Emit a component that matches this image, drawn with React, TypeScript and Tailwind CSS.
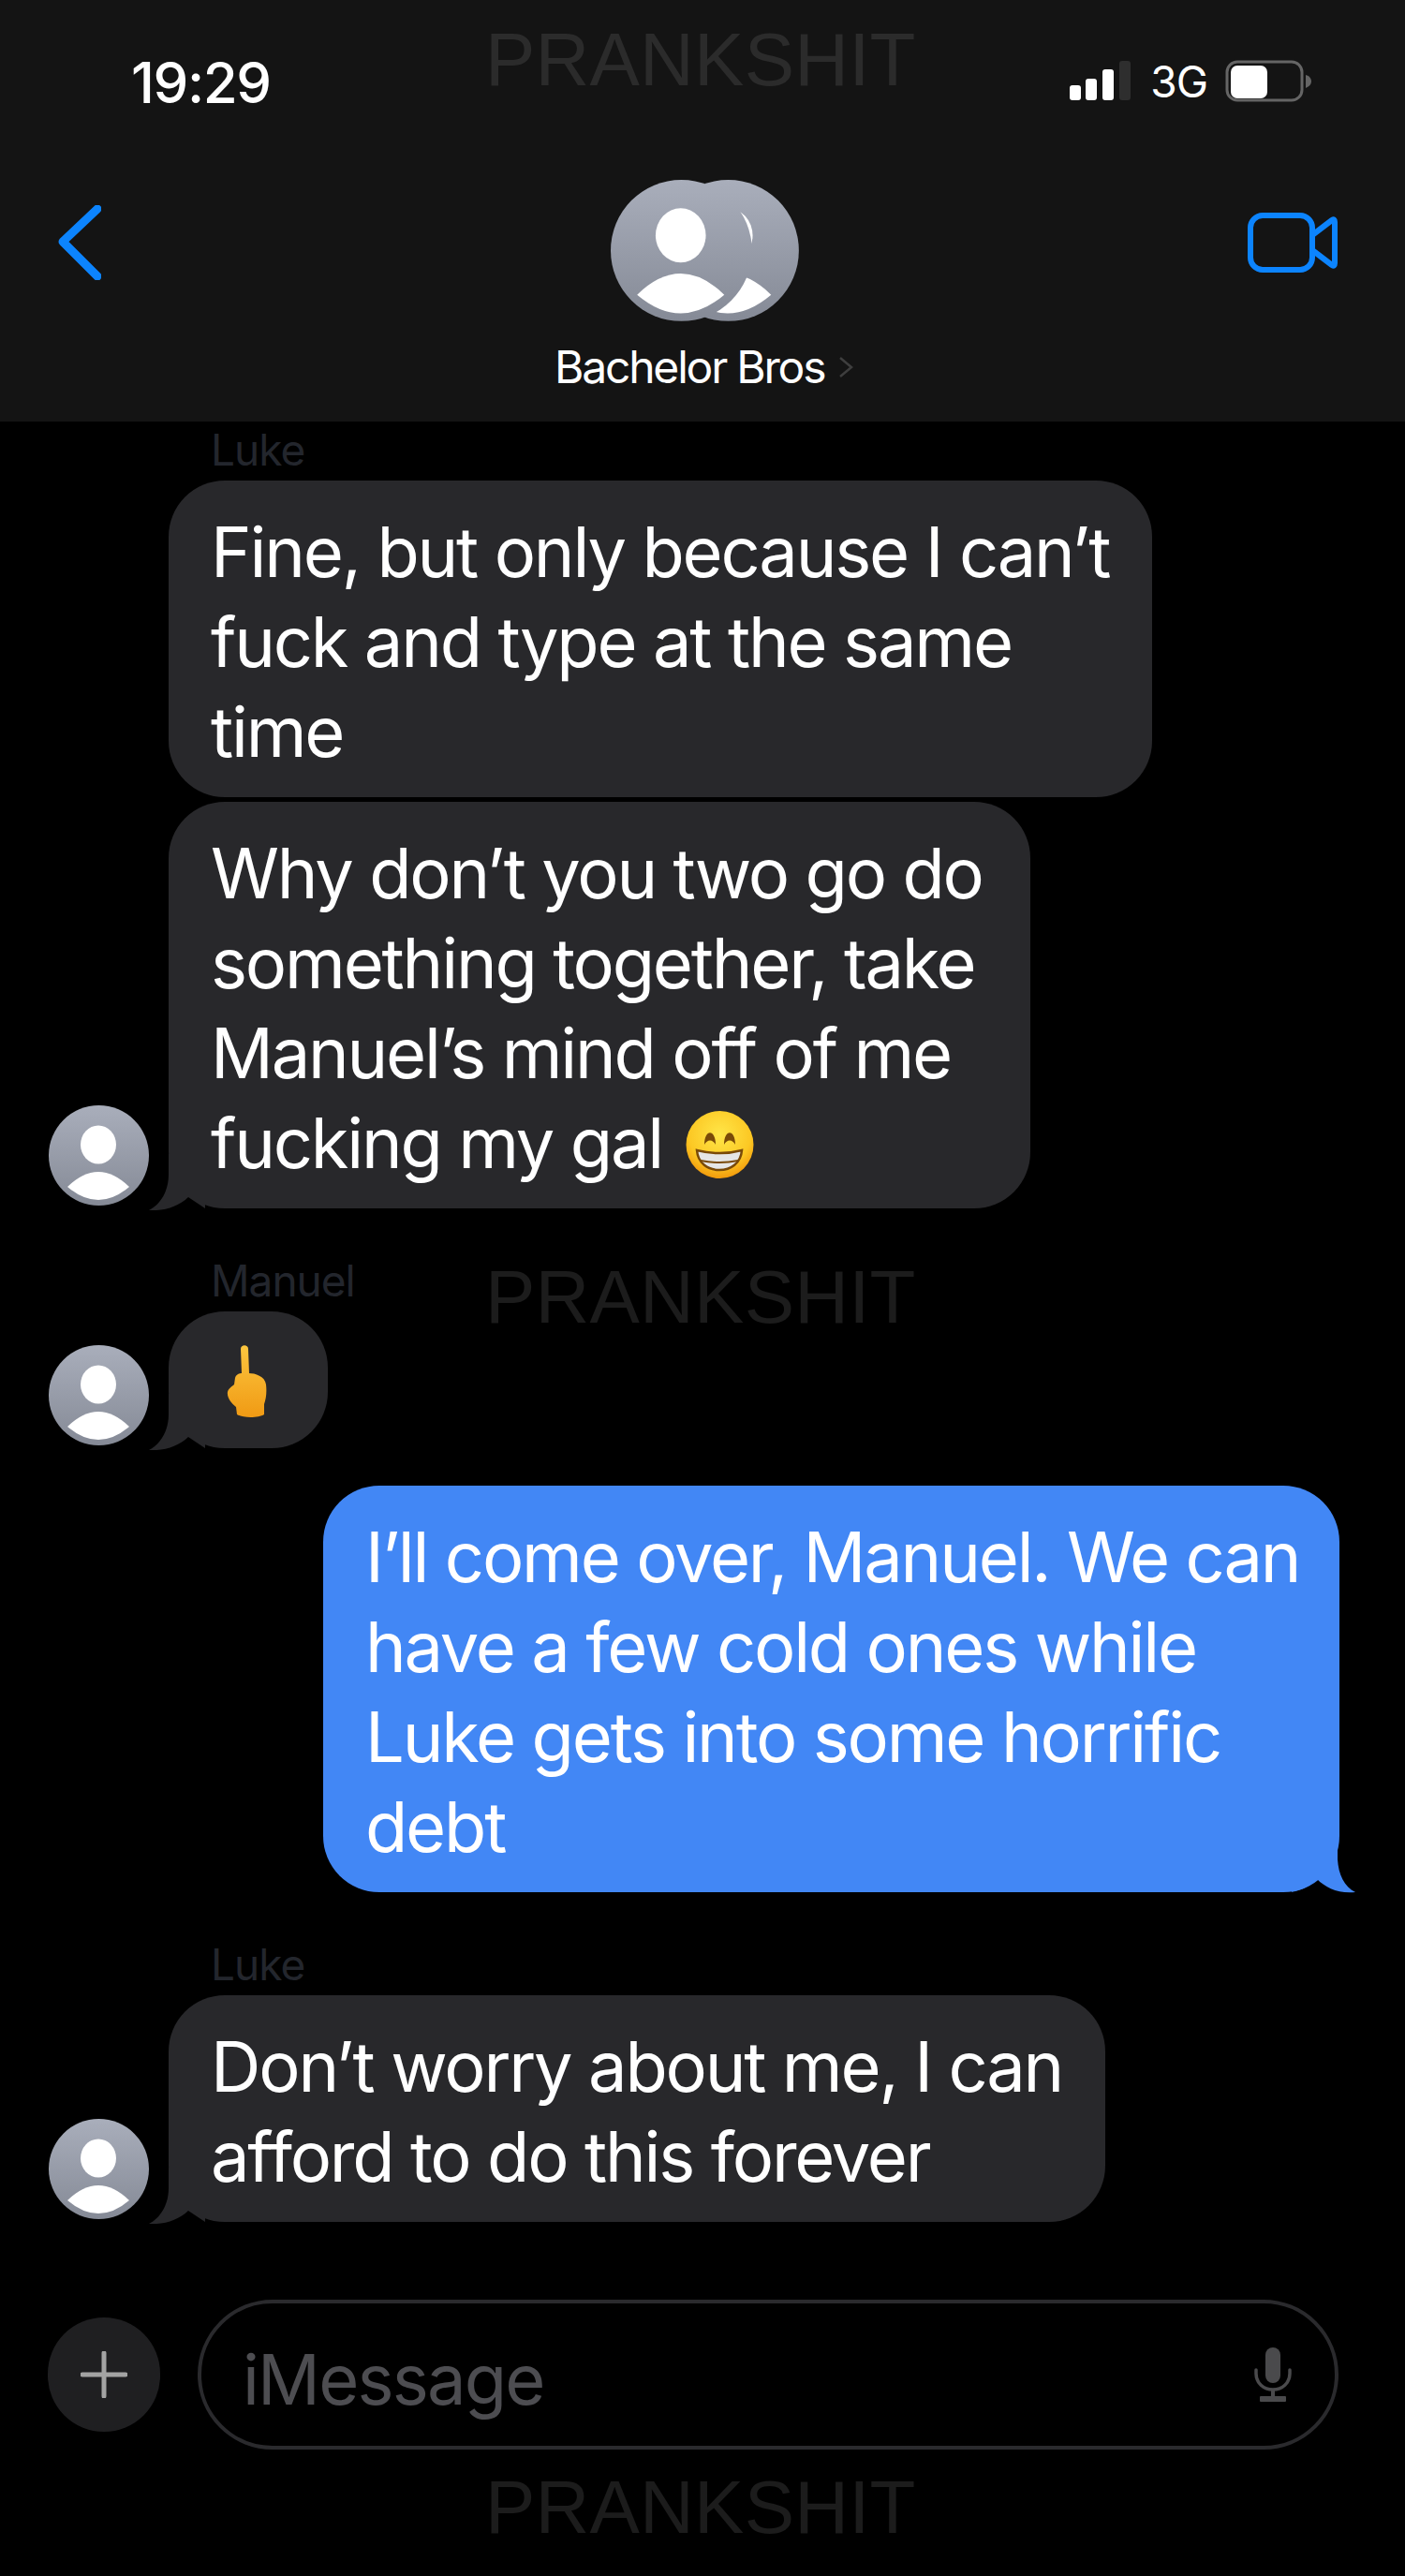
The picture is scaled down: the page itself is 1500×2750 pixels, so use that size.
import React from "react";

const inter = "font-['Inter','Noto_Sans',sans-serif]";

function Avatar() {
  return (
    <svg width="107" height="107" viewBox="0 0 107 107" className="shrink-0 block mb-[3px]">
      <defs>
        <linearGradient id="av" x1="0" y1="0" x2="0" y2="1">
          <stop offset="0" stopColor="#a9aebb" />
          <stop offset="1" stopColor="#858a96" />
        </linearGradient>
      </defs>
      <circle cx="53.5" cy="53.5" r="53.5" fill="url(#av)" />
      <ellipse cx="53" cy="42" rx="19" ry="20.5" fill="#fff" />
      <path d="M20 87Q53 55 86 87Q53 115 20 87Z" fill="#fff" />
    </svg>
  );
}

function TailLeft() {
  return (
    <svg width="60" height="60" viewBox="0 0 60 60" className="absolute left-[-21px] bottom-[-2px]">
      <path d="M21 0V22C21 40 12 54 0 60C16 61 32 56 42 46L60 58V0Z" fill="#28282b" />
    </svg>
  );
}

function TailRight() {
  return (
    <svg width="70" height="70" viewBox="0 0 70 70" className="absolute right-[-19px] bottom-[-1px]">
      <path d="M49 0V34C50 50 56 63 68 69C50 71 36 64 27 55C20 63 8 69 -6 69H0V0Z" fill="#4287f5" />
    </svg>
  );
}

function Grin() {
  return (
    <svg width="73" height="74" viewBox="0 0 73 74" className="inline-block align-[-12px] ml-[6px]">
      <defs>
        <radialGradient id="gr" cx="0.5" cy="0.35" r="0.65">
          <stop offset="0" stopColor="#ffe648" />
          <stop offset="0.7" stopColor="#fcc824" />
          <stop offset="1" stopColor="#f29a0c" />
        </radialGradient>
      </defs>
      <circle cx="36.5" cy="37" r="36" fill="url(#gr)" />
      <path d="M20 37C20 20 32 20 32 37C29 31 23 31 20 37Z" fill="#7a4a08" />
      <path d="M41 37C41 20 53 20 53 37C50 31 44 31 41 37Z" fill="#7a4a08" />
      <path d="M12 43C28 47 45 47 60 43C59 57 48 64 36 64C24 64 13 57 12 43Z" fill="#e6e6e6" stroke="#7a4a08" strokeWidth="2.500" />
      <path d="M16 54Q36 58 56 54" fill="none" stroke="#7a4a08" strokeWidth="2" />
    </svg>
  );
}

function Finger() {
  return (
    <svg width="44" height="78" viewBox="0 0 44 78">
      <defs>
        <linearGradient id="fi" x1="0" y1="0" x2="0" y2="1">
          <stop offset="0" stopColor="#fcc63f" />
          <stop offset="1" stopColor="#f09a14" />
        </linearGradient>
      </defs>
      <path d="M15 4C15 -1 23 -1 23 4L24 30C30 30 41 33 42 42C43 50 42 58 40 63L40 74C34 78 17 78 11 74L10 66C5 62 0 56 1 50C2 46 6 44 8 42L9 35C10 31 14 30 16 30Z" fill="url(#fi)" />
    </svg>
  );
}

function Name({ children }: { children: React.ReactNode }) {
  return (
    <div className={`h-[60px] pt-[2px] ml-[225px] text-[46px] leading-[50px] tracking-[-1px] text-[#23262d] ${inter}`}>
      {children}
    </div>
  );
}

function Row({
  avatar,
  width,
  children,
  className = "",
}: {
  avatar?: boolean;
  width: string;
  children: React.ReactNode;
  className?: string;
}) {
  return (
    <div className={`flex items-end pl-[52px] gap-[21px] ${className}`}>
      {avatar ? <Avatar /> : <div className="w-[107px] shrink-0" />}
      <div className={`relative bg-[#28282b] rounded-[60px] pl-[45px] pr-[30px] pt-[28px] pb-[22px] text-white text-[74px] leading-[96px] tracking-[-2.2px] whitespace-nowrap ${width} ${inter}`}>
        {avatar && <TailLeft />}
        <div className="relative">{children}</div>
      </div>
    </div>
  );
}

function Watermark({ className }: { className: string }) {
  return (
    <div className={`absolute left-[518px] text-[80px] leading-[80px] tracking-[0.2px] font-['Liberation_Sans',sans-serif] whitespace-nowrap ${className}`}>
      PRANKSHIT
    </div>
  );
}

export default function App() {
  return (
    <div className="relative w-[1500px] h-[2750px] bg-black overflow-hidden">
      <div className="h-[450px] bg-[#141414] relative">
        <div className="flex items-center justify-between pl-[140px] pr-[100px] pt-[58px] h-[118px]">
          <div className={`text-white text-[60px] leading-[60px] font-medium tracking-[-1.4px] ${inter}`}>19:29</div>
          <div className="flex items-center mt-[-3px]">
            <svg width="66" height="44" viewBox="0 0 66 44" className="block">
              <rect x="0" y="26" width="12" height="16" rx="3" fill="#fff" />
              <rect x="17" y="19" width="12" height="23" rx="3" fill="#fff" />
              <rect x="35" y="9" width="12" height="33" rx="3" fill="#fff" />
              <rect x="53" y="0" width="12" height="42" rx="3" fill="#2e2e2e" />
            </svg>
            <span className={`ml-[20px] text-white text-[46px] leading-[46px] tracking-[-1px] ${inter}`}>3G</span>
            <svg width="92" height="46" viewBox="0 0 92 46" className="block ml-[19px]">
              <rect x="2" y="2" width="80" height="41" rx="11" fill="none" stroke="#656565" strokeWidth="3" />
              <rect x="6" y="6" width="39" height="35" rx="7" fill="#fff" />
              <path d="M86 16C90 17 92 20 92 23C92 26 90 28 86 30Z" fill="#656565" />
            </svg>
          </div>
        </div>
        <div className="flex items-center justify-between pl-[62px] pr-[72px] pt-[101px]">
          <svg width="46" height="80" viewBox="0 0 46 80" className="block">
            <path d="M42 4L5 39L42 76" fill="none" stroke="#0c84fe" strokeWidth="9" strokeLinecap="round" strokeLinejoin="round" />
          </svg>
          <svg width="96" height="64" viewBox="0 0 96 64" className="block">
            <rect x="3" y="3" width="66" height="58" rx="13" fill="none" stroke="#0c84fe" strokeWidth="6" />
            <path d="M69 24L90 8Q93 6 93 10V54Q93 58 90 56L69 40Z" fill="none" stroke="#0c84fe" strokeWidth="6" strokeLinejoin="round" />
          </svg>
        </div>
        <svg width="202" height="152" viewBox="0 0 202 152" className="absolute left-[652px] top-[192px]">
          <defs>
            <linearGradient id="hg" x1="0" y1="0" x2="0" y2="1">
              <stop offset="0" stopColor="#a9aebb" />
              <stop offset="1" stopColor="#858a96" />
            </linearGradient>
          </defs>
          <g transform="translate(50 0) scale(1.41)">
            <circle cx="53.500" cy="53.500" r="53.500" fill="url(#hg)" />
            <ellipse cx="53" cy="42" rx="19" ry="20.500" fill="#fff" />
            <path d="M20 87Q53 55 86 87Q53 115 20 87Z" fill="#fff" />
          </g>
          <g transform="scale(1.41)">
            <circle cx="53.500" cy="53.500" r="53.500" fill="url(#hg)" />
            <ellipse cx="53" cy="42" rx="19" ry="20.500" fill="#fff" />
            <path d="M20 87Q53 55 86 87Q53 115 20 87Z" fill="#fff" />
          </g>
        </svg>
        <div className="absolute left-[592px] top-[362px] flex items-center">
          <span className={`text-white text-[48px] leading-[60px] tracking-[-2.2px] ${inter}`}>Bachelor Bros</span>
          <svg width="16" height="24" viewBox="0 0 16 24" className="block ml-[15px]">
            <path d="M2 2L14 12L2 22" fill="none" stroke="#3e3e3e" strokeWidth="2.500" />
          </svg>
        </div>
      </div>

      <Watermark className="top-[24px] text-[#2b2b2b]" />
      <Watermark className="top-[1345px] text-[#1c1c1c]" />
      <Watermark className="top-[2637px] text-[#1c1c1c]" />

      <div className="pt-[3px]">
        <Name>Luke</Name>
        <Row width="w-[1050px]">
          Fine, but only because I can’t
          <br />
          fuck and type at the same
          <br />
          time
        </Row>
        <Row avatar width="w-[920px]" className="mt-[5px]">
          Why don’t you two go do
          <br />
          something together, take
          <br />
          Manuel’s mind off of me
          <br />
          fucking my gal <Grin />
        </Row>
        <div className="mt-[50px]">
          <Name>Manuel</Name>
        </div>
        <Row avatar width="w-[170px] h-[146px]">
          <div className="pl-[17px] pt-[8px]">
            <Finger />
          </div>
        </Row>
        <div className="flex justify-end pr-[70px] mt-[40px]">
          <div className={`relative bg-[#4287f5] rounded-[60px] pl-[45px] pr-[30px] pt-[28px] pb-[22px] w-[1085px] text-white text-[74px] leading-[96px] tracking-[-2.2px] whitespace-nowrap ${inter}`}>
            <TailRight />
            <div className="relative">
              I’ll come over, Manuel. We can
              <br />
              have a few cold ones while
              <br />
              Luke gets into some horrific
              <br />
              debt
            </div>
          </div>
        </div>
        <div className="mt-[50px]">
          <Name>Luke</Name>
        </div>
        <Row avatar width="w-[1000px]">
          Don’t worry about me, I can
          <br />
          afford to do this forever
        </Row>

        <div className="flex items-center pl-[51px] pr-[71px] gap-[40px] mt-[83px]">
          <div className="w-[120px] h-[122px] rounded-full bg-[#1f1f21] flex items-center justify-center shrink-0">
            <svg width="50" height="50" viewBox="0 0 50 50" className="block">
              <path d="M25 2V48M2 25H48" stroke="#a3a3a3" strokeWidth="5" strokeLinecap="round" />
            </svg>
          </div>
          <div className="flex-1 h-[160px] rounded-full border-[4px] border-[#2a2a2d] flex items-center justify-between pl-[44px] pr-[46px]">
            <span className={`relative top-[5px] text-[#4d4d51] text-[74px] leading-[90px] tracking-[-1.8px] ${inter}`}>iMessage</span>
            <svg width="40" height="58" viewBox="0 0 40 58" className="block">
              <rect x="12" y="0" width="16" height="38" rx="8" fill="#4a4a4c" />
              <path d="M2 24V28C2 38 10 45 20 45C30 45 38 38 38 28V24" fill="none" stroke="#4a4a4c" strokeWidth="3.500" strokeLinecap="round" />
              <path d="M20 45V53" stroke="#4a4a4c" strokeWidth="4" />
              <rect x="6" y="52" width="28" height="6" rx="1" fill="#4a4a4c" />
            </svg>
          </div>
        </div>
      </div>
    </div>
  );
}
